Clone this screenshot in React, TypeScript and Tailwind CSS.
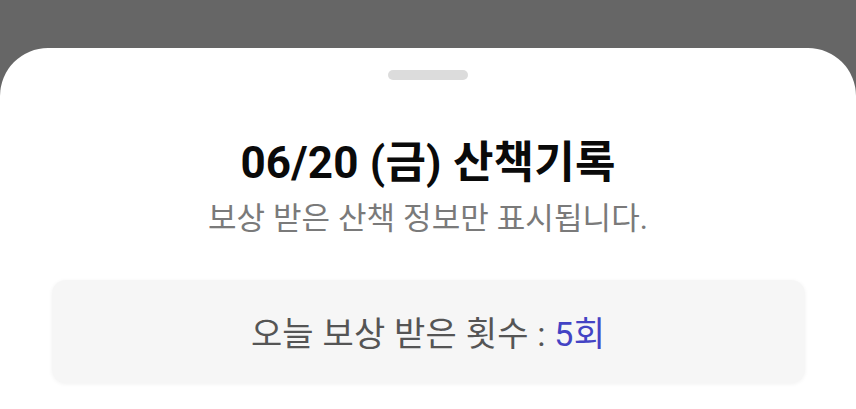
export default function App() {
  return (
    <div className="w-[856px] h-[409px] bg-[#666666] overflow-hidden" style={{ fontFamily: "Roboto, 'Noto Sans CJK KR', sans-serif" }}>
      <div className="mt-[48px] h-[361px] bg-white rounded-t-[48px] flex flex-col items-center">
        <div className="mt-[22px] w-[80px] h-[10px] rounded-full bg-[#dcdcdc]" />
        <h1 className="mt-[57px] text-[44px] leading-[52px] font-bold text-[#0a0a0a] tracking-[0.2px]">06/20 (금) 산책기록</h1>
        <p className="mt-[10px] text-[31px] leading-[40px] text-[#7a7a7a] tracking-[0.1px]">보상 받은 산책 정보만 표시됩니다.</p>
        <div className="mt-[41px] w-[753px] h-[103px] rounded-[14px] bg-[#f6f6f6] shadow-[0_1px_4px_rgba(0,0,0,0.06)] flex items-center justify-center">
          <span className="mt-[4px] text-[34px] leading-[40px] text-[#555555] tracking-[0.2px]">오늘 보상 받은 횟수 : <span className="text-[#4343c4]">5회</span></span>
        </div>
      </div>
    </div>
  );
}
